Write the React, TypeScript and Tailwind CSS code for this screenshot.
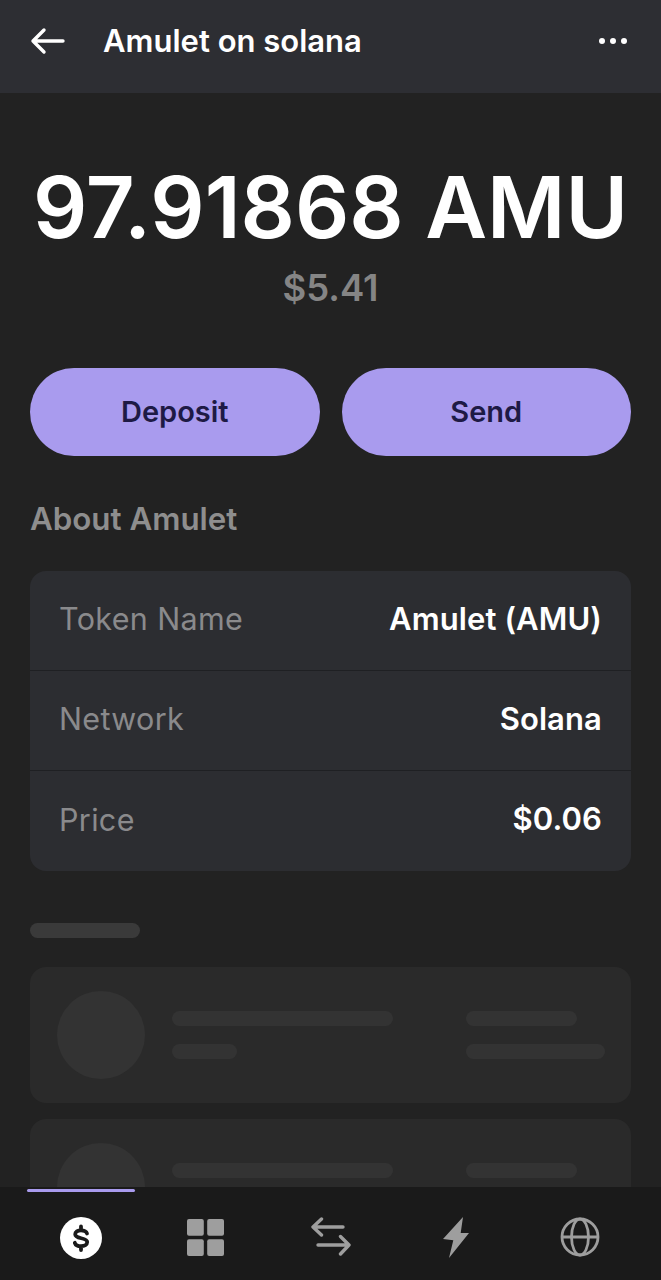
import React, { FC } from "react";

const Row: FC<{ label: string; value: string; last?: boolean }> = ({ label, value, last }) => (
  <div className={`h-[100px] pb-[3px] flex items-center justify-between pl-[29px] pr-[29px] ${last ? "" : "border-b border-[#1f2023]"}`}>
    <span className="text-[30.5px] text-[#8a8a8c] tracking-[0.35px]">{label}</span>
    <span className="text-[31px] font-semibold text-white tracking-[0.1px]">{value}</span>
  </div>
);

const SkeletonCard: FC = () => (
  <div className="h-[136px] shrink-0 rounded-2xl bg-[#2a2a2a] pl-[27px] pr-[26px] flex items-center">
    <div className="w-[88px] h-[88px] rounded-full bg-[#333333] shrink-0" />
    <div className="ml-[27px] w-[294px] flex flex-col gap-[18px]">
      <div className="h-[15px] w-[221px] rounded-full bg-[#333333]" />
      <div className="h-[15px] w-[65px] rounded-full bg-[#333333]" />
    </div>
    <div className="flex flex-col gap-[18px]">
      <div className="h-[15px] w-[111px] rounded-full bg-[#333333]" />
      <div className="h-[15px] w-[139px] rounded-full bg-[#333333]" />
    </div>
  </div>
);

const App: FC = () => {
  return (
    <div className="h-[1280px] w-[661px] overflow-hidden flex flex-col bg-[#222222] font-['Inter',sans-serif]">
      {/* header */}
      <div className="h-[93px] shrink-0 bg-[#2d2e33] pb-[12px] pl-[30px] pr-[34px] flex items-center">
        <svg width="36" height="28" viewBox="0 0 36 28" fill="none" stroke="white" strokeWidth="3.4" strokeLinecap="round" strokeLinejoin="round">
          <path d="M33 14H3M14 3 3 14l11 11" />
        </svg>
        <span className="ml-[37px] mt-[2px] text-[31px] font-semibold text-white flex-1">Amulet on solana</span>
        <div className="flex gap-[5px]">
          <div className="w-[6px] h-[6px] rounded-full bg-white" />
          <div className="w-[6px] h-[6px] rounded-full bg-white" />
          <div className="w-[6px] h-[6px] rounded-full bg-white" />
        </div>
      </div>

      <div className="flex-1 min-h-0 overflow-hidden px-[30px]">
        <div className="mt-[65px] text-center text-[85px] leading-[100px] font-semibold text-white whitespace-nowrap -mx-[30px]">
          97.91868 AMU
        </div>
        <div className="mt-[8px] text-center text-[36.5px] leading-[44px] font-semibold text-[#858585]">$5.41</div>

        <div className="mt-[58px] flex gap-[22px]">
          <button className="flex-1 h-[88px] rounded-full bg-[#a99bee] text-[#1e1a45] text-[29px] font-semibold">Deposit</button>
          <button className="flex-1 h-[88px] rounded-full bg-[#a99bee] text-[#1e1a45] text-[29px] font-semibold">Send</button>
        </div>

        <div className="mt-[44px] text-[31.3px] leading-[38px] font-semibold text-[#8e8e8e]">About Amulet</div>

        <div className="mt-[33px] rounded-2xl bg-[#2c2d31]">
          <Row label="Token Name" value="Amulet (AMU)" />
          <Row label="Network" value="Solana" />
          <Row label="Price" value="$0.06" last />
        </div>

        <div className="mt-[52px] h-[15px] w-[110px] rounded-full bg-[#3a3a3a]" />

        <div className="mt-[29px] flex flex-col gap-[16px]">
          <SkeletonCard />
          <SkeletonCard />
        </div>
      </div>

      {/* bottom nav */}
      <div className="h-[93px] shrink-0 bg-[#1a1a1a] relative pt-[30px] px-[18px] grid grid-cols-5 items-start justify-items-center">
        <div className="absolute left-[27px] top-[2px] h-[3px] w-[108px] rounded-full bg-[#a99bee]" />
        <svg width="42" height="42" viewBox="0 0 42 42">
          <circle cx="21" cy="21" r="21" fill="white" />
          <path d="M27 16.500c-.6-2-3-3.200-6-3.200-3.300 0-5.800 1.500-5.800 4 0 5.500 12 2.400 12 7.800 0 2.600-2.800 4.100-6.200 4.100-3.100 0-5.500-1.200-6.200-3.400M21 9.500v3.500M21 29.500v3.500" fill="none" stroke="#1a1a1a" strokeWidth="3.800" strokeLinecap="round" />
        </svg>
        <svg className="mt-[2px]" width="37" height="37" viewBox="0 0 37 37" fill="#9e9e9e">
          <rect x="0" y="0" width="16.800" height="16.800" rx="2" />
          <rect x="20.200" y="0" width="16.800" height="16.800" rx="2" />
          <rect x="0" y="20.200" width="16.800" height="16.800" rx="2" />
          <rect x="20.200" y="20.200" width="16.800" height="16.800" rx="2" />
        </svg>
        <svg width="42" height="42" viewBox="0 0 42 42" fill="none" stroke="#9e9e9e" strokeWidth="3.400" strokeLinecap="round" strokeLinejoin="round">
          <path d="M33 10H3M11.500 2 3 10l8.500 8M8 28h31M30.500 19.500 39 28l-8.500 9" />
        </svg>
        <svg width="26" height="41" viewBox="0 0 26 41" fill="#9e9e9e">
          <path d="M20 0 0 22l10.300 1.300L6 41 26 16h-8.300z" />
        </svg>
        <svg className="-ml-[1px]" width="40" height="40" viewBox="0 0 40 40" fill="none" stroke="#9e9e9e" strokeWidth="2.800">
          <circle cx="20" cy="20" r="18" />
          <ellipse cx="20" cy="20" rx="8.500" ry="18" />
          <path d="M2 20h36" />
        </svg>
      </div>
    </div>
  );
};

export default App;
